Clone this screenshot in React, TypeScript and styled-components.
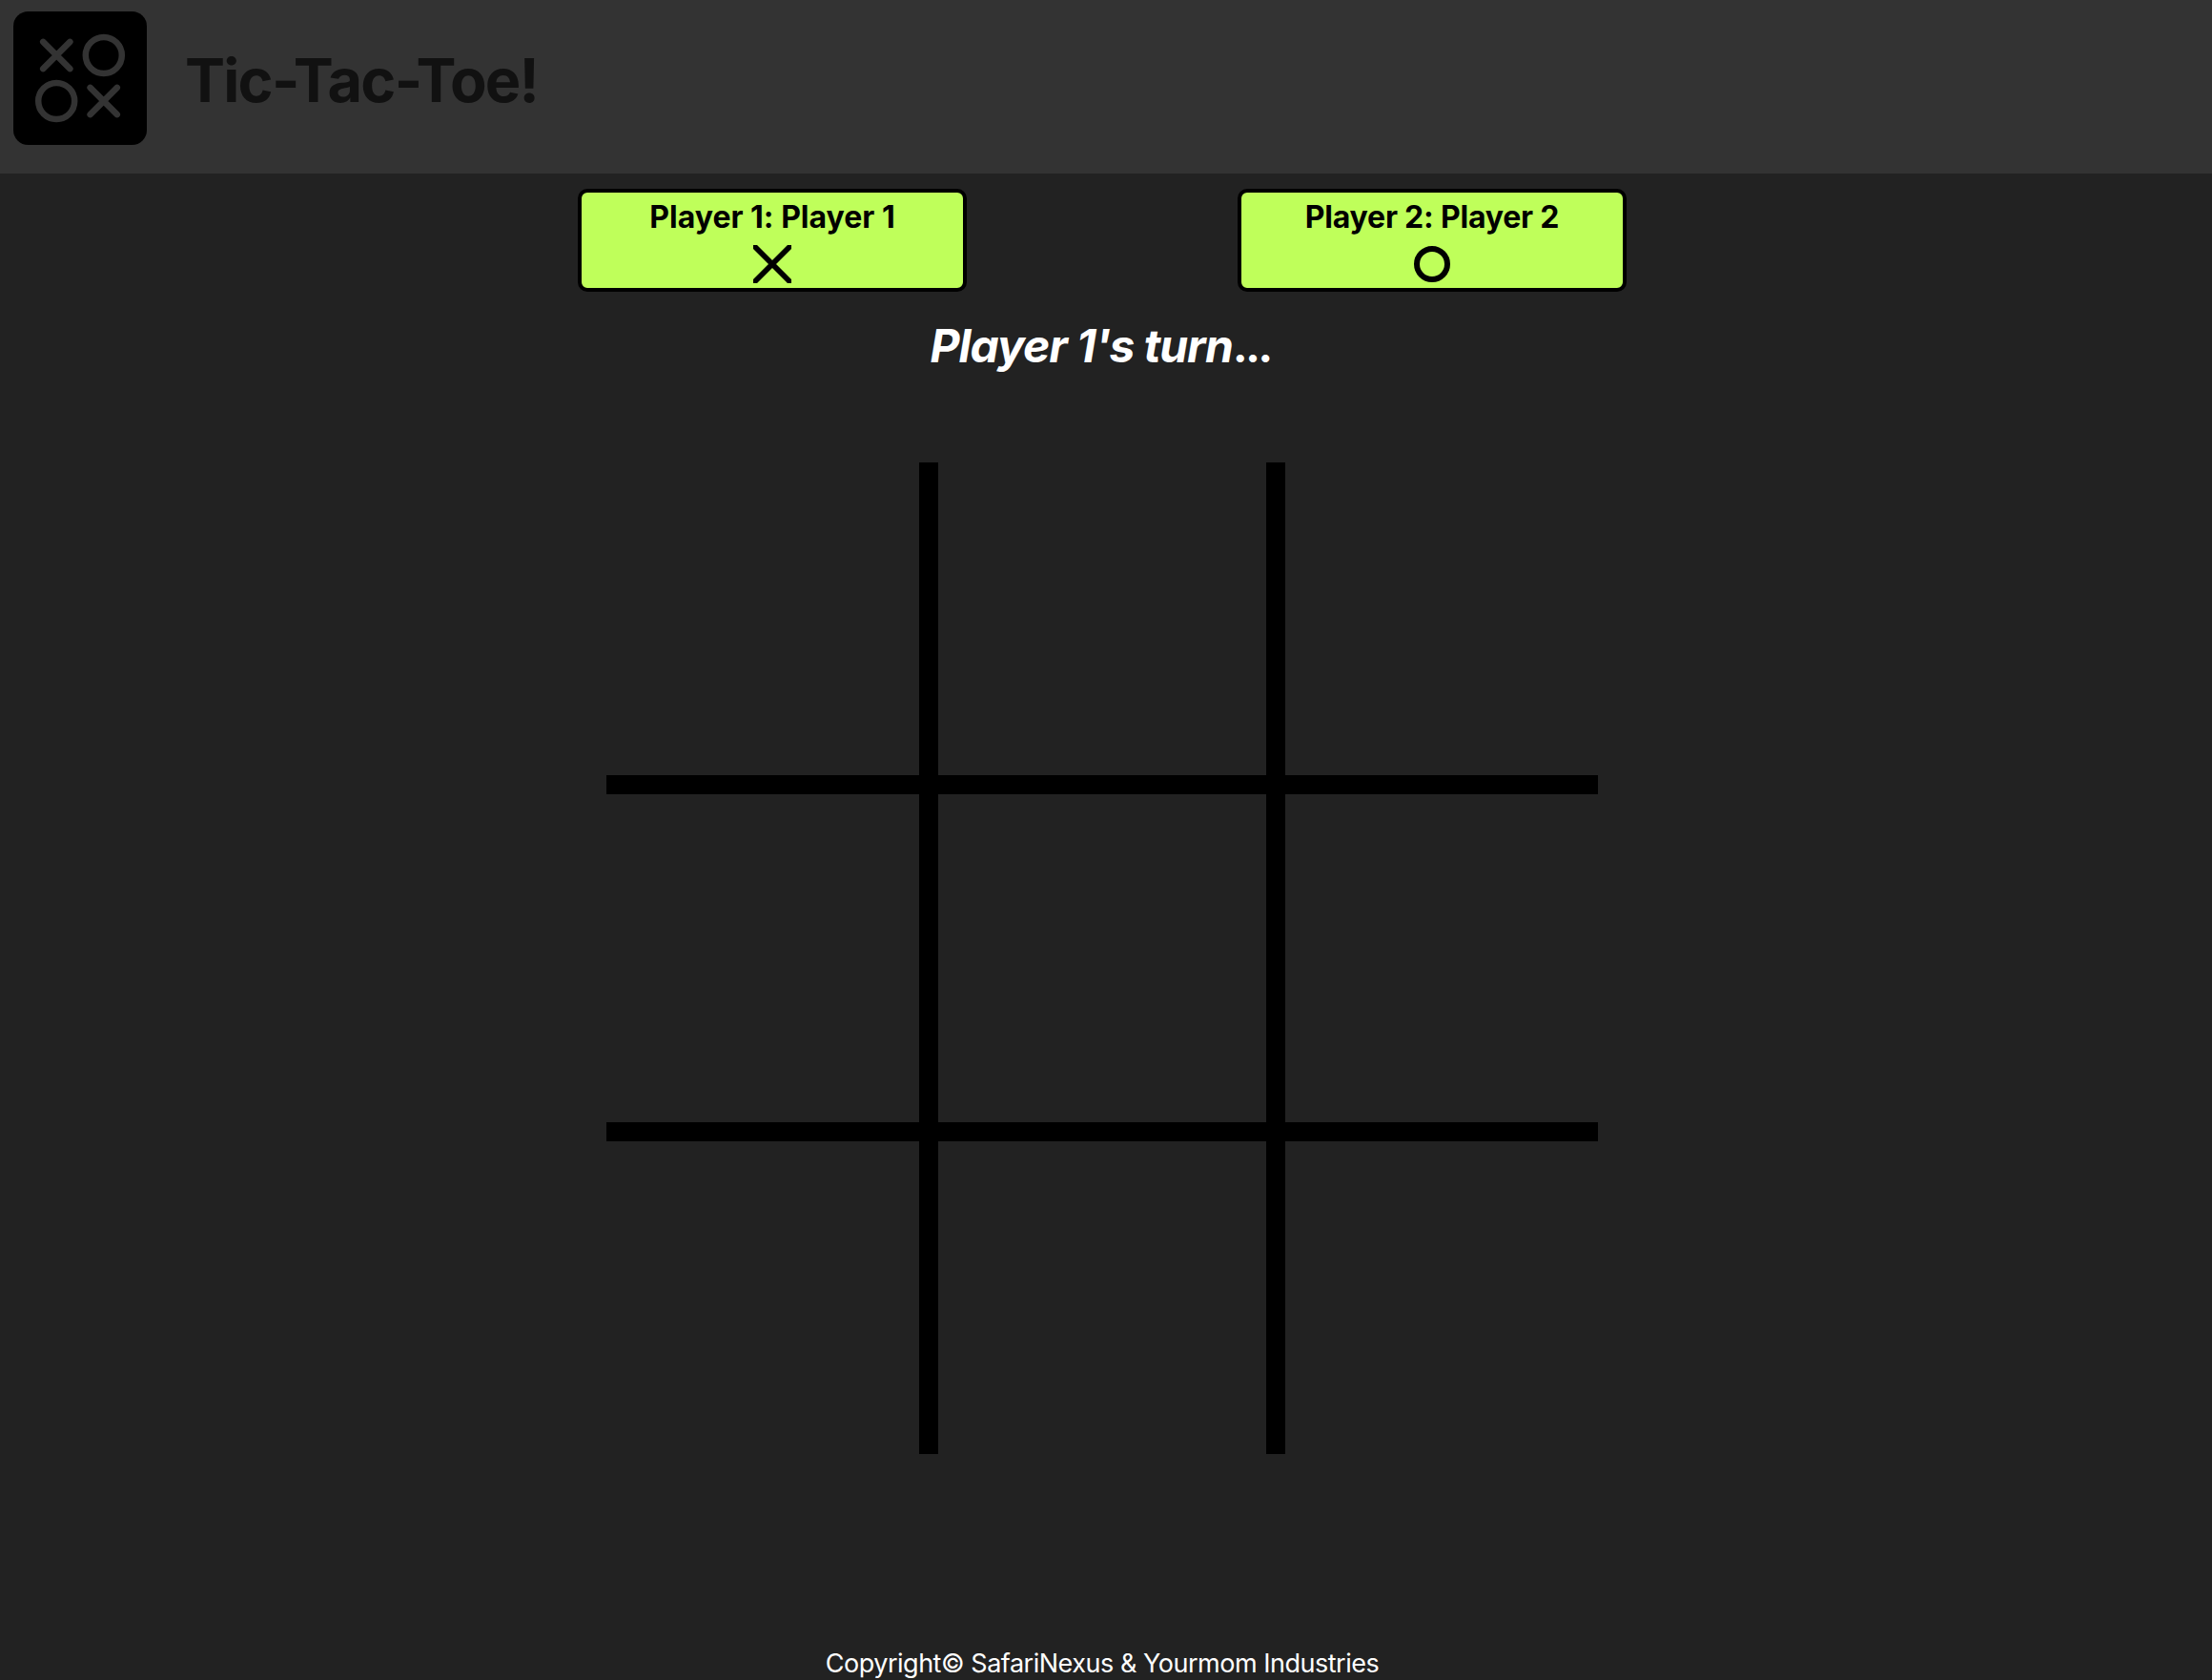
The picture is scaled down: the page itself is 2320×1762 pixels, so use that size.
import React from "react";
import styled, { createGlobalStyle } from "styled-components";

const GlobalStyle = createGlobalStyle`
  * { box-sizing: border-box; }
  body {
    margin: 0;
    background: #222;
    color: #fff;
    font-family: Inter, "Liberation Sans", sans-serif;
    font-feature-settings: "calt" 0;
  }
`;

const Page = styled.div`
  display: flex;
  flex-direction: column;
  height: 1762px;
  overflow: hidden;
`;

const Header = styled.header`
  display: flex;
  align-items: flex-start;
  gap: 40px;
  height: 182px;
  padding: 12px 14px;
  background: #333;
`;

const Logo = styled.svg`
  display: block;
  width: 140px;
  height: 140px;
  flex: none;
`;

const Title = styled.h1`
  margin: 33px 0 0;
  color: #111;
  font-size: 63px;
  line-height: 78px;
  font-weight: 700;
  letter-spacing: -1.75px;
  white-space: nowrap;
`;

const Main = styled.main`
  display: flex;
  flex-direction: column;
  align-items: center;
  flex: 1;
  padding: 16px 8px 0 0;
`;

const Players = styled.section`
  display: flex;
  gap: 284px;
`;

const PlayerCard = styled.div`
  display: flex;
  flex-direction: column;
  align-items: center;
  width: 408px;
  height: 108px;
  padding-top: 6px;
  border: 4px solid #000;
  border-radius: 10px;
  background: #bfff5a;
  color: #000;
`;

const PlayerName = styled.h2<{ $spacing: number }>`
  margin: 0;
  font-size: 32px;
  line-height: 40px;
  font-weight: 700;
  letter-spacing: ${(p) => p.$spacing}px;
  white-space: nowrap;
`;

const Mark = styled.svg`
  display: block;
  width: 40px;
  height: 40px;
  margin-top: 9px;
`;

const Turn = styled.p`
  margin: 27px 0 0;
  padding-right: 4px;
  font-size: 48px;
  line-height: 60px;
  font-weight: 700;
  font-style: italic;
  letter-spacing: -1.05px;
  white-space: nowrap;
`;

const Dots = styled.span`
  font-style: normal;
  letter-spacing: -2.8px;
`;

const Board = styled.div`
  display: grid;
  grid-template-columns: 348px 364px 328px;
  grid-template-rows: 348px 364px 328px;
  margin-top: 92px;
`;

const Cell = styled.div<{ $right: boolean; $bottom: boolean }>`
  border: 0 solid #000;
  border-right-width: ${(p) => (p.$right ? 20 : 0)}px;
  border-bottom-width: ${(p) => (p.$bottom ? 20 : 0)}px;
`;

const Footer = styled.footer`
  margin-top: auto;
  font-size: 27px;
  line-height: 34px;
  letter-spacing: -0.48px;
  white-space: nowrap;
`;

const cells = Array.from({ length: 9 }, (_, i) => i);

export default function App() {
  return (
    <>
      <GlobalStyle />
      <Page>
        <Header>
          <Logo viewBox="0 0 140 140" fill="none" stroke="#333" strokeWidth="6.5" strokeLinecap="round">
            <rect width="140" height="140" rx="15.5" fill="#000" stroke="none" />
            <path d="M31.2 31.9 59.4 60.1M59.4 31.9 31.2 60.1" />
            <circle cx="94.8" cy="46" r="19" />
            <circle cx="45.2" cy="94" r="19" />
            <path d="M80.6 79.9 108.8 108.1M108.8 79.9 80.6 108.1" />
          </Logo>
          <Title>Tic-Tac-Toe!</Title>
        </Header>
        <Main>
          <Players>
            <PlayerCard>
              <PlayerName $spacing={0}>Player 1: Player 1</PlayerName>
              <Mark viewBox="0 0 40 40" fill="none" stroke="#000" strokeWidth="5.7" strokeLinecap="round">
                <path d="M2 2 38 38M38 2 2 38" />
              </Mark>
            </PlayerCard>
            <PlayerCard>
              <PlayerName $spacing={-0.2}>Player 2: Player 2</PlayerName>
              <Mark viewBox="0 0 40 40" fill="none" stroke="#000" strokeWidth="6">
                <circle cx="20" cy="20" r="16" />
              </Mark>
            </PlayerCard>
          </Players>
          <Turn>
            Player 1's turn<Dots>...</Dots>
          </Turn>
          <Board>
            {cells.map((i) => (
              <Cell key={i} $right={i % 3 < 2} $bottom={i < 6} />
            ))}
          </Board>
          <Footer>Copyright© SafariNexus &amp; Yourmom Industries</Footer>
        </Main>
      </Page>
    </>
  );
}
